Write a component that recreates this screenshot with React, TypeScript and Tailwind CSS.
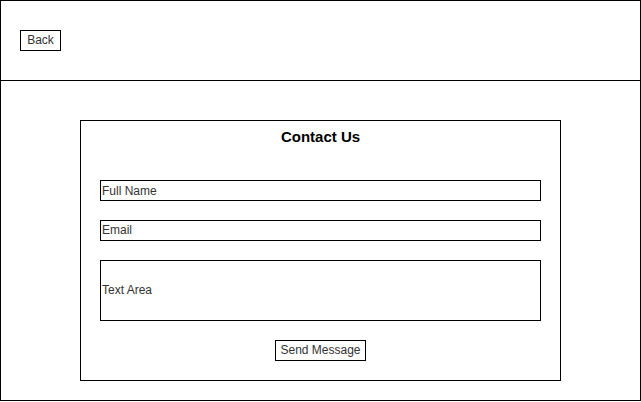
import React from "react";

export default function App() {
  const font = { fontFamily: '"Liberation Sans", Arial, sans-serif' };
  return (
    <div className="w-[641px] h-[402px] bg-white" style={font}>
      <div className="w-[641px] h-[401px] border border-black flex flex-col">
        <div className="h-[80px] shrink-0 border-b border-black pl-[19px] pt-[29px]">
          <div className="w-[41px] h-[21px] border border-black flex items-center justify-center pb-[2px] text-[12px] text-[#333] leading-none">
            Back
          </div>
        </div>
        <div className="flex-1 flex justify-center pt-[39px]">
          <div className="w-[481px] h-[261px] border border-black flex flex-col px-[19px] pt-[6px]">
            <div className="h-[20px] leading-[20px] text-center text-[15px] font-bold text-black">
              Contact Us
            </div>
            <div className="mt-[33px] h-[21px] border border-black flex items-center pl-[1px] text-[12px] text-[#333] leading-none">
              Full Name
            </div>
            <div className="mt-[19px] h-[21px] border border-black flex items-center pl-[1px] pb-[2px] text-[12px] text-[#333] leading-none">
              Email
            </div>
            <div className="mt-[19px] h-[61px] border border-black flex items-center pl-[1px] pb-[2px] text-[12px] text-[#333] leading-none">
              Text Area
            </div>
            <div className="mt-[19px] flex justify-center">
              <div className="w-[91px] h-[21px] border border-black flex items-center justify-center pb-[2px] text-[12px] text-[#333] leading-none">
                Send Message
              </div>
            </div>
          </div>
        </div>
      </div>
    </div>
  );
}
